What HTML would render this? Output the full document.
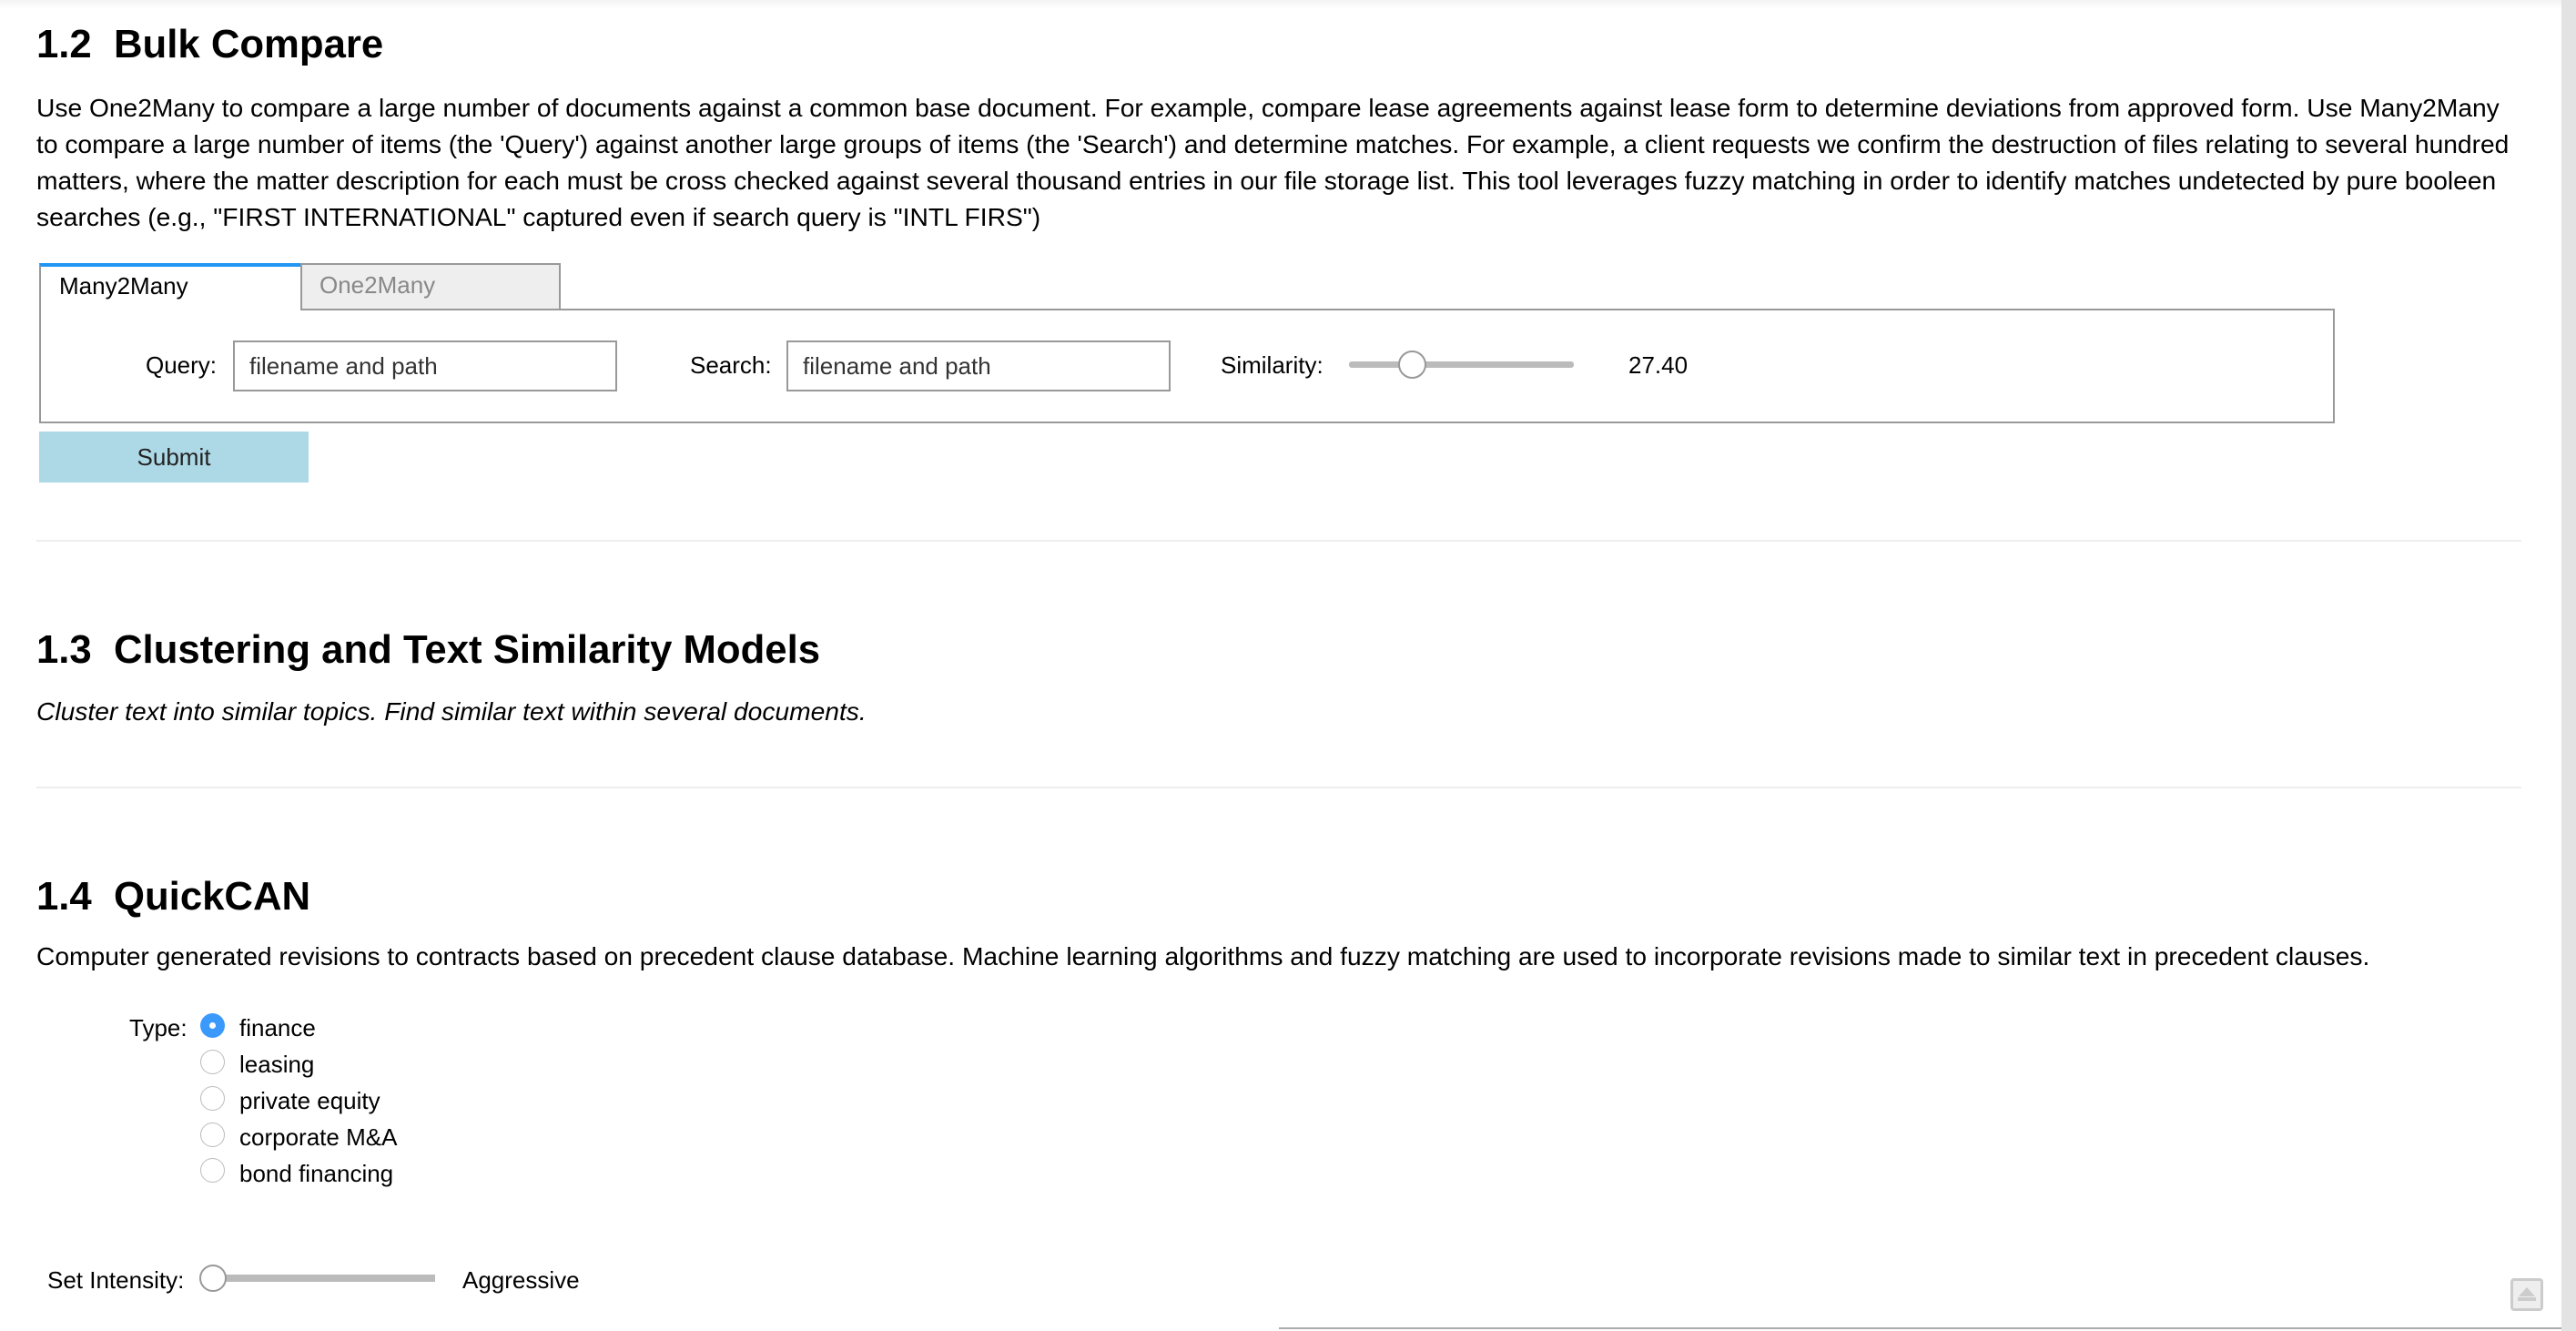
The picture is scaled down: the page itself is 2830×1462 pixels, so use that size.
<!DOCTYPE html>
<html><head><meta charset="utf-8"><style>
body{margin:0;width:2830px;height:1462px;overflow:hidden;background:#fff;font-family:"Liberation Sans",Arial,sans-serif;color:#000;position:relative}
.a{position:absolute;white-space:nowrap}
h2{position:absolute;margin:0;font-size:43.7px;font-weight:bold;left:40px;line-height:1}
.p{font-size:28.2px;line-height:40px;left:40px}
.hr{position:absolute;left:40px;width:2730px;height:2px;background:#eee}
.inp{position:absolute;border:2px solid #999;box-sizing:border-box;height:56px;font-size:26px;line-height:52px;padding-left:16px;color:#333}
.radio{position:absolute;width:27px;height:27px;border-radius:50%;border:1.5px solid #bbb;box-sizing:border-box;background:#fff;left:220px}
.lbl{font-size:26px}
</style></head><body>
<div class="a" style="left:0;top:0;width:2814px;height:10px;background:linear-gradient(#f3f3f3,#fff)"></div>
<h2 style="top:27px">1.2&nbsp; Bulk Compare</h2>
<div class="a p" style="top:98px">Use One2Many to compare a large number of documents against a common base document. For example, compare lease agreements against lease form to determine deviations from approved form. Use Many2Many<br>to compare a large number of items (the 'Query') against another large groups of items (the 'Search') and determine matches. For example, a client requests we confirm the destruction of files relating to several hundred<br>matters, where the matter description for each must be cross checked against several thousand entries in our file storage list. This tool leverages fuzzy matching in order to identify matches undetected by pure booleen<br>searches (e.g., "FIRST INTERNATIONAL" captured even if search query is "INTL FIRS")</div>

<div class="a" style="left:43px;top:339px;width:2522px;height:126px;border:2px solid #999;box-sizing:border-box"></div>
<div class="a" style="left:43px;top:289px;width:287px;height:52px;background:#fff;border-top:4px solid #2196f3;border-left:2px solid #999;box-sizing:border-box"></div>
<div class="a lbl" style="left:65px;top:294px;line-height:40px">Many2Many</div>
<div class="a" style="left:330px;top:289px;width:286px;height:50px;background:#eee;border:2px solid #999;border-bottom:none;box-sizing:border-box"></div>
<div class="a lbl" style="left:351px;top:293px;line-height:40px;color:#888">One2Many</div>

<div class="a lbl" style="left:160px;top:381px;line-height:40px">Query:</div>
<div class="inp" style="left:256px;top:374px;width:422px">filename and path</div>
<div class="a lbl" style="left:758px;top:381px;line-height:40px">Search:</div>
<div class="inp" style="left:864px;top:374px;width:422px">filename and path</div>
<div class="a lbl" style="left:1341px;top:381px;line-height:40px">Similarity:</div>
<div class="a" style="left:1482px;top:397px;width:247px;height:7px;background:#bbb;border-radius:3px"></div>
<div class="a" style="left:1536px;top:385px;width:31px;height:31px;border-radius:50%;background:#fff;border:2px solid #999;box-sizing:border-box"></div>
<div class="a lbl" style="left:1789px;top:381px;line-height:40px">27.40</div>

<div class="a lbl" style="left:43px;top:474px;width:296px;height:56px;background:#add8e6;text-align:center;line-height:56px;color:#222">Submit</div>

<div class="hr" style="top:593px"></div>
<h2 style="top:692px">1.3&nbsp; Clustering and Text Similarity Models</h2>
<div class="a p" style="top:761px;font-style:italic">Cluster text into similar topics. Find similar text within several documents.</div>
<div class="hr" style="top:864px"></div>
<h2 style="top:963px">1.4&nbsp; QuickCAN</h2>
<div class="a p" style="top:1030px">Computer generated revisions to contracts based on precedent clause database. Machine learning algorithms and fuzzy matching are used to incorporate revisions made to similar text in precedent clauses.</div>

<div class="a lbl" style="left:142px;top:1110px;line-height:38px">Type:</div>
<div class="radio" style="top:1113px;background:#3b99fc;border:none"><div style="position:absolute;left:10px;top:10px;width:7px;height:7px;border-radius:50%;background:#fff"></div></div>
<div class="a lbl" style="left:263px;top:1110px;line-height:38px">finance</div>
<div class="radio" style="top:1153px"></div>
<div class="a lbl" style="left:263px;top:1150px;line-height:38px">leasing</div>
<div class="radio" style="top:1193px"></div>
<div class="a lbl" style="left:263px;top:1190px;line-height:38px">private equity</div>
<div class="radio" style="top:1233px"></div>
<div class="a lbl" style="left:263px;top:1230px;line-height:38px">corporate M&amp;A</div>
<div class="radio" style="top:1272px"></div>
<div class="a lbl" style="left:263px;top:1270px;line-height:38px">bond financing</div>

<div class="a lbl" style="left:52px;top:1386px;line-height:40px">Set Intensity:</div>
<div class="a" style="left:226px;top:1400px;width:252px;height:8px;background:#bbb"></div>
<div class="a" style="left:219px;top:1389px;width:30px;height:30px;border-radius:50%;background:#fff;border:2px solid #999;box-sizing:border-box"></div>
<div class="a lbl" style="left:508px;top:1386px;line-height:40px">Aggressive</div>

<div class="a" style="left:1405px;top:1458px;width:1409px;height:2px;background:#aaa"></div>
<div class="a" style="left:2758px;top:1404px;width:36px;height:36px;border:3px solid #ccc;border-radius:4px;box-sizing:border-box;background:#eee"><div style="position:absolute;left:6px;top:7px;width:0;height:0;border-left:9px solid transparent;border-right:9px solid transparent;border-bottom:10px solid #ccc"></div><div style="position:absolute;left:5px;top:18px;width:20px;height:4px;background:#ccc"></div></div>
<div class="a" style="left:2814px;top:0;width:16px;height:1462px;background:#e3e3e3"></div>
</body></html>
